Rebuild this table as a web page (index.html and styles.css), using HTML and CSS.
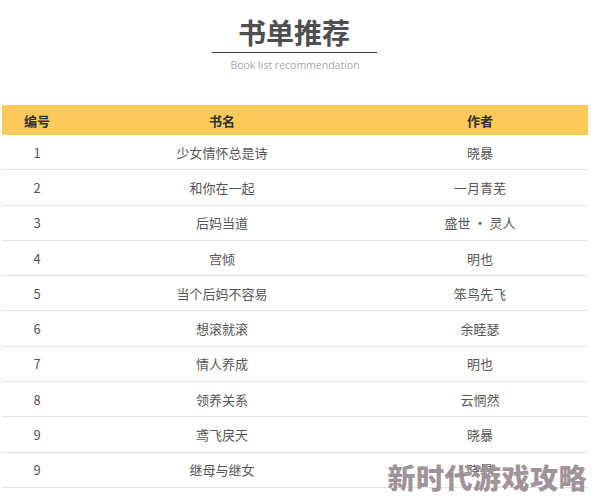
FILE: index.html
```html
<!DOCTYPE html>
<html lang="zh">
<head>
<meta charset="utf-8">
<link rel="stylesheet" href="styles.css">
</head>
<body>
<div class="page">
  <header class="title">
    <h1>书单推荐</h1>
    <div class="rule"></div>
    <p class="sub">Book list recommendation</p>
  </header>
  <div class="table">
    <div class="row head"><span>编号</span><span>书名</span><span>作者</span></div>
    <div class="row"><span>1</span><span>少女情怀总是诗</span><span>晓暴</span></div>
    <div class="row"><span>2</span><span>和你在一起</span><span>一月青芜</span></div>
    <div class="row"><span>3</span><span>后妈当道</span><span>盛世 · 灵人</span></div>
    <div class="row"><span>4</span><span>宫倾</span><span>明也</span></div>
    <div class="row"><span>5</span><span>当个后妈不容易</span><span>笨鸟先飞</span></div>
    <div class="row"><span>6</span><span>想滚就滚</span><span>余睦瑟</span></div>
    <div class="row"><span>7</span><span>情人养成</span><span>明也</span></div>
    <div class="row"><span>8</span><span>领养关系</span><span>云惘然</span></div>
    <div class="row"><span>9</span><span>鸢飞戾天</span><span>晓暴</span></div>
    <div class="row"><span>9</span><span>继母与继女</span><span>晓暴</span></div>
  </div>
  <div class="mark">新时代游戏攻略</div>
</div>
</body>
</html>
```
FILE: styles.css
```css
html, body {
  margin: 0;
  padding: 0;
  background: #fff;
}
body {
  font-family: "Noto Sans CJK SC", "Noto Sans", sans-serif;
  width: 594px;
  height: 503px;
  overflow: hidden;
}
.page {
  position: relative;
  width: 594px;
  height: 503px;
}
.title {
  display: flex;
  flex-direction: column;
  align-items: center;
  padding-top: 14px;
  height: 91px;
  box-sizing: border-box;
}
.title h1 {
  margin: 0;
  font-size: 28px;
  line-height: 36px;
  font-weight: 700;
  color: #4f4f4f;
  transform: translateX(-3px);
}
.rule {
  width: 165px;
  height: 1px;
  background: #3a3a3a;
  margin-top: 2px;
  transform: translateX(-3px);
}
.sub {
  margin: 5px 0 0;
  font-family: "Open Sans", "Noto Sans", sans-serif;
  font-size: 10.5px;
  line-height: 14px;
  color: #a8a8a8;
  transform: translateX(-2px);
}
.table {
  margin: 14px 0 0 2px;
  width: 586px;
}
.row {
  display: grid;
  grid-template-columns: 70px 300px 216px;
  height: 35.3px;
  align-items: center;
  border-bottom: 1px solid #e3e3e3;
  box-sizing: border-box;
  font-size: 13px;
  color: #555;
}
.row span {
  text-align: center;
}
.row.head {
  height: 30px;
  background: #fcc95a;
  border-bottom: none;
  font-weight: 700;
  color: #333;
}
.mark {
  position: absolute;
  right: 7px;
  top: 457px;
  font-size: 28px;
  line-height: 40px;
  font-weight: 900;
  color: #a1939a;
  letter-spacing: 0.5px;
}
```
